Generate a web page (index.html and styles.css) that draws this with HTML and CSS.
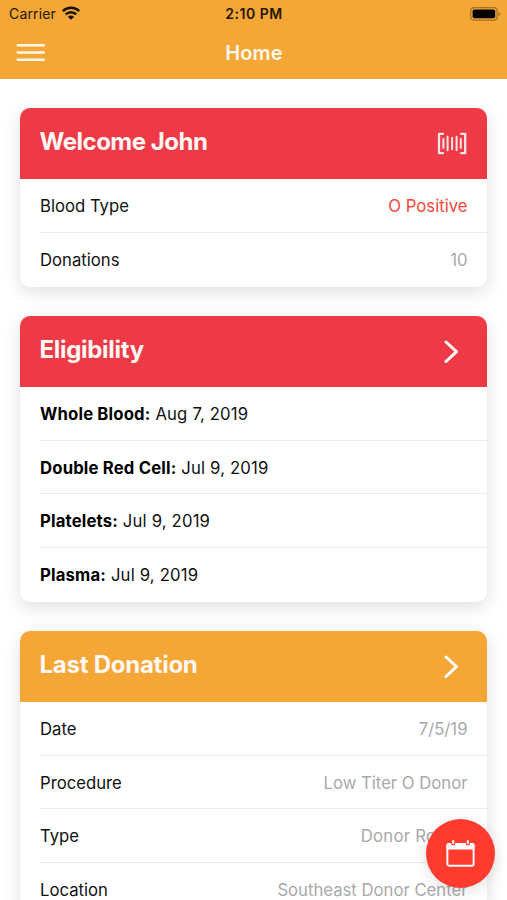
FILE: index.html
```html
<!DOCTYPE html>
<html lang="en">
<head>
<meta charset="utf-8">
<meta name="viewport" content="width=device-width, initial-scale=1">
<title>Home</title>
<link rel="stylesheet" href="styles.css">
</head>
<body>
<div class="app">
  <header class="topbar">
    <div class="status">
      <div class="carrier"><span>Carrier</span>
        <svg class="wifi" width="18" height="14" viewBox="0 0 18 14" fill="none" stroke="#171105" stroke-width="2.5"><path d="M.8 5.1a11.6 11.6 0 0 1 16.4 0M3.7 8.4a7.5 7.5 0 0 1 10.6 0"/><path d="M9 13.8 5.9 10.9a4.4 4.4 0 0 1 6.2 0z" fill="#171105" stroke="none"/></svg>
      </div>
      <div class="time">2:10 PM</div>
      <svg class="battery" width="31" height="14" viewBox="0 0 31 14"><rect x=".7" y=".7" width="26.4" height="12.4" rx="3.4" fill="none" stroke="#a5712a" stroke-width="1.3"/><rect x="2.6" y="2.5" width="22.6" height="8.8" rx="1.8"/><path d="M28.4 4.7q3.8 2.2 0 4.4z" fill="#a5712a"/></svg>
    </div>
    <div class="nav">
      <svg class="menu" width="29" height="19" viewBox="0 0 29 19" stroke="#fffaf0" stroke-width="2.4" stroke-linecap="round"><path d="M1.8 2.3h26.1M1.8 9.5h26.1M1.8 16.7h26.1"/></svg>
      <h1>Home</h1>
    </div>
  </header>
  <main>
    <section class="card">
      <div class="card-head"><h2>Welcome John</h2>
        <svg class="barcode" width="30" height="23" viewBox="0 0 30 23" fill="none" stroke="#ffe5e7" stroke-width="2" stroke-linecap="round" stroke-linejoin="round"><path stroke-width="2.3" d="M6 1.8H2v19.4h4M24.2 1.8h4v19.4h-4"/><path d="M6.4 7v9M10.6 4.7v13.6M15.1 5.7v11.6M19.6 4.7v13.6M23.8 7v9"/></svg>
      </div>
      <ul>
        <li><span>Blood Type</span><span class="value positive">O Positive</span></li>
        <li><span>Donations</span><span class="value">10</span></li>
      </ul>
    </section>
    <section class="card">
      <div class="card-head"><h2 class="eligibility">Eligibility</h2>
        <svg class="chevron" width="15" height="24" viewBox="0 0 15 24" fill="none" stroke="#fff" stroke-width="3" stroke-linecap="round" stroke-linejoin="round"><path d="m2 2 10.5 9.7L2 21.5"/></svg>
      </div>
      <ul>
        <li><span class="date"><b>Whole Blood:</b> Aug 7, 2019</span></li>
        <li><span class="date"><b>Double Red Cell:</b> Jul 9, 2019</span></li>
        <li><span class="date"><b>Platelets:</b> Jul 9, 2019</span></li>
        <li><span class="date"><b>Plasma:</b> Jul 9, 2019</span></li>
      </ul>
    </section>
    <section class="card">
      <div class="card-head orange"><h2 class="last">Last Donation</h2>
        <svg class="chevron" width="15" height="24" viewBox="0 0 15 24" fill="none" stroke="#fff" stroke-width="3" stroke-linecap="round" stroke-linejoin="round"><path d="m2 2 10.5 9.7L2 21.5"/></svg>
      </div>
      <ul>
        <li><span>Date</span><span class="value">7/5/19</span></li>
        <li><span>Procedure</span><span class="value">Low Titer O Donor</span></li>
        <li><span>Type</span><span class="value type">Donor Roster</span></li>
        <li><span>Location</span><span class="value">Southeast Donor Center</span></li>
      </ul>
    </section>
  </main>
  <button class="fab" aria-label="Calendar">
    <svg width="29" height="27" viewBox="0 0 29 27" fill="none" stroke="#fff"><rect x="1.4" y="3.9" width="26.2" height="21.8" rx="1.8" stroke-width="1.9"/><path d="M.5 9.5V5.2Q.5 2.9 2.8 2.9h23.4q2.3 0 2.3 2.3v4.3z" fill="#fff" stroke="none"/><path d="M7.2 1v2.2M21.8 1v2.2" stroke="#ff3b30" stroke-width="4.4" stroke-linecap="round"/><path d="M7.2 1.1v2M21.8 1.1v2" stroke-width="2.1" stroke-linecap="round"/></svg>
  </button>
</div>
</body>
</html>
```
FILE: styles.css
```css
* { box-sizing: border-box; }
body { margin: 0; background: #fff; font-family: Inter, "Liberation Sans", sans-serif; color: #111; }
.app { position: relative; height: 900px; overflow: hidden; }
.topbar { height: 79px; background: #f4a636; }
.status { display: grid; grid-template-columns: 1fr auto 1fr; align-items: center; height: 27px; padding: 0 6px 0 9px; font-size: 14px; color: #211706; }
.carrier { display: flex; align-items: center; gap: 6px; letter-spacing: .15px; }
.wifi { margin-top: -2px; }
.time { margin-left: -2px; font-weight: 600; letter-spacing: .5px; }
.battery { justify-self: end; }
.nav { display: grid; grid-template-columns: 1fr auto 1fr; align-items: center; height: 51px; padding: 0 16px; }
h1 { margin: 0 0 0 1px; color: #fffaf0; font-size: 20px; font-weight: 600; letter-spacing: .15px; }
main { display: flex; flex-direction: column; gap: 29.3px; padding: 29.4px 20px 0 20px; }
.card { border-radius: 10px; background: #fff; box-shadow: 0 5px 18px rgba(0, 0, 0, .13); flex: none; }
.card-head { display: flex; justify-content: space-between; height: 71px; padding: 19px 20px 0 19.5px; border-radius: 10px 10px 0 0; background: #ee3a47; }
.card-head.orange { background: #f4a636; }
h2 { margin: 0; color: #fff8f5; font-size: 24px; line-height: 29px; font-weight: 700; letter-spacing: -.5px; }
.eligibility { letter-spacing: -.3px; }
.last { letter-spacing: -.25px; }
.barcode { margin-top: 5px; }
.chevron { margin: 5px 8px 0 0; }
ul { margin: 0; padding: 0 0 0 20px; list-style: none; }
li { display: flex; align-items: center; justify-content: space-between; height: 53.7px; padding: 1px 19.5px 0 0; border-bottom: 1px solid #ececec; font-size: 16.7px; }
li:last-child { border-bottom-color: transparent; }
b { font-weight: 700; color: #000; }
.date { letter-spacing: .17px; }
.value { color: #a9a9ab; }
.type { letter-spacing: .27px; }
.positive { color: #f84638; }
.fab { position: absolute; left: 426px; top: 819px; width: 69px; height: 69px; display: grid; place-items: center; padding: 0; border: 0; border-radius: 50%; background: #ff3b30; box-shadow: 0 4px 14px rgba(0, 0, 0, .12); }
```
